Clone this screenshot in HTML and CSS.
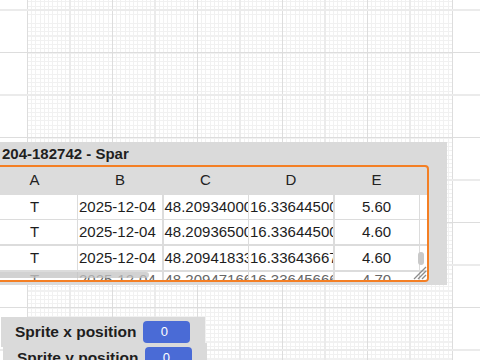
FILE: index.html
```html
<!DOCTYPE html>
<html lang="en">
<head>
    <meta charset="UTF-8">
    <meta name="viewport" content="width=device-width, initial-scale=1.0">
    <title>Stage monitors</title>
    <link rel="stylesheet" href="styles.css">
</head>
<body>
    <div class="stage">
        <!-- list monitor (table) -->
        <div class="list-monitor">
            <div class="list-title">204-182742 - Spar</div>
            <div class="list-body">
                <div class="list-head">
                    <div>A</div><div>B</div><div>C</div><div>D</div><div>E</div><div>F</div>
                </div>
                <div class="list-rows">
                    <div class="cell">T</div>
                    <div class="cell num">2025-12-04</div>
                    <div class="cell num">48.20934000</div>
                    <div class="cell num">16.33644500</div>
                    <div class="cell">5.60</div>
                    <div class="cell"></div>

                    <div class="cell">T</div>
                    <div class="cell num">2025-12-04</div>
                    <div class="cell num">48.20936500</div>
                    <div class="cell num">16.33644500</div>
                    <div class="cell">4.60</div>
                    <div class="cell"></div>

                    <div class="cell">T</div>
                    <div class="cell num">2025-12-04</div>
                    <div class="cell num">48.20941833</div>
                    <div class="cell num">16.33643667</div>
                    <div class="cell">4.60</div>
                    <div class="cell"></div>

                    <div class="cell peek">T</div>
                    <div class="cell num peek">2025-12-04</div>
                    <div class="cell num peek">48.20947166</div>
                    <div class="cell num peek">16.33645666</div>
                    <div class="cell peek">4.70</div>
                    <div class="cell peek"></div>
                </div>
                <div class="hscroll"></div>
                <div class="vscroll"></div>
                <svg class="resize" width="14" height="14" viewBox="0 0 14 14">
                    <line x1="1" y1="13" x2="13" y2="1"/>
                    <line x1="5" y1="13" x2="13" y2="5"/>
                    <line x1="9" y1="13" x2="13" y2="9"/>
                </svg>
            </div>
        </div>

        <!-- variable monitors -->
        <div class="var-monitor mon-x">
            <span class="var-label">Sprite x position</span>
            <span class="var-value">0</span>
        </div>
        <div class="var-monitor mon-y">
            <span class="var-label">Sprite y position</span>
            <span class="var-value">0</span>
        </div>
    </div>
</body>
</html>
```

FILE: styles.css
```css
* {
    box-sizing: border-box;
}
body {
    margin: 0;
    font-family: "Liberation Sans", Arial, sans-serif;
    background: #fff;
}
.stage {
    position: relative;
    width: 480px;
    height: 360px;
    overflow: hidden;
    background-color: #fff;
    background-image:
        repeating-linear-gradient(to bottom, transparent 0 9px, #ebebeb 9px 11px, transparent 11px 52px, #dddddd 52px 53px, transparent 53px 85px),
        repeating-linear-gradient(to right, #dddddd 0 1px, transparent 1px 42px, #ebebeb 42px 44px, transparent 44px 85px),
        repeating-linear-gradient(to right, #f1f1f1 0 1px, transparent 1px 4.25px),
        repeating-linear-gradient(to bottom, transparent 0 1.5px, #f1f1f1 1.5px 2.5px, transparent 2.5px 4.25px);
    background-repeat: no-repeat;
    background-size: 100% 100%, 426px 100%, 426px 100%, 426px 100%;
    background-position: 0 0, 27px 0, 27px 0, 27px 0;
}
.list-monitor {
    position: absolute;
    left: -12px;
    top: 142px;
    width: 459px;
    height: 143px;
    background: #dadada;
}
.list-title {
    height: 23px;
    line-height: 23px;
    padding-left: 14px;
    font-size: 15px;
    font-weight: bold;
    color: #1f1f1f;
    white-space: nowrap;
}
.list-body {
    position: relative;
    margin-left: 2.5px;
    width: 438.5px;
    height: 117px;
    border: 2px solid #f47f24;
    border-radius: 4px;
    background: #dcdcdc;
    overflow: hidden;
}
.list-head,
.list-rows {
    display: grid;
    grid-template-columns: repeat(6, 84px);
    column-gap: 1.5px;
}
.list-head {
    height: 26.5px;
    line-height: 26.5px;
    text-align: center;
    font-size: 15px;
    color: #222;
}
.list-rows {
    grid-auto-rows: 24px;
    row-gap: 1.7px;
    margin-top: 1px;
}
.cell {
    background: #fff;
    font-size: 15px;
    line-height: 24px;
    color: #1d1d1d;
    text-align: center;
    white-space: nowrap;
    overflow: hidden;
}
.cell.num {
    text-align: left;
    padding-left: 1px;
}
.cell.peek {
    line-height: 16px;
    color: #666;
}
.hscroll {
    position: absolute;
    left: 0;
    top: 105px;
    width: 156px;
    height: 5.5px;
    border-radius: 3px;
    background: rgba(195, 195, 195, 0.75);
}
.vscroll {
    position: absolute;
    right: 2.7px;
    top: 84.7px;
    width: 6.6px;
    height: 13.3px;
    border-radius: 3px;
    background: #c9c9c9;
}
.resize {
    position: absolute;
    right: 0;
    bottom: 0;
    stroke: #8c8c8c;
    stroke-width: 1.2;
}
.var-monitor {
    position: absolute;
    display: flex;
    align-items: center;
    gap: 7px;
    height: 30px;
    padding: 0 15px 0 14px;
    background: #dadada;
}
.mon-x {
    left: 1px;
    top: 317px;
}
.mon-y {
    left: 3px;
    top: 343px;
}
.var-label {
    font-size: 15.5px;
    font-weight: bold;
    color: #1e1e1e;
    white-space: nowrap;
}
.var-value {
    width: 47px;
    height: 22px;
    line-height: 22px;
    padding-right: 5px;
    border-radius: 4px;
    background: #4a6bd6;
    color: #fff;
    font-size: 13px;
    text-align: center;
}
```
